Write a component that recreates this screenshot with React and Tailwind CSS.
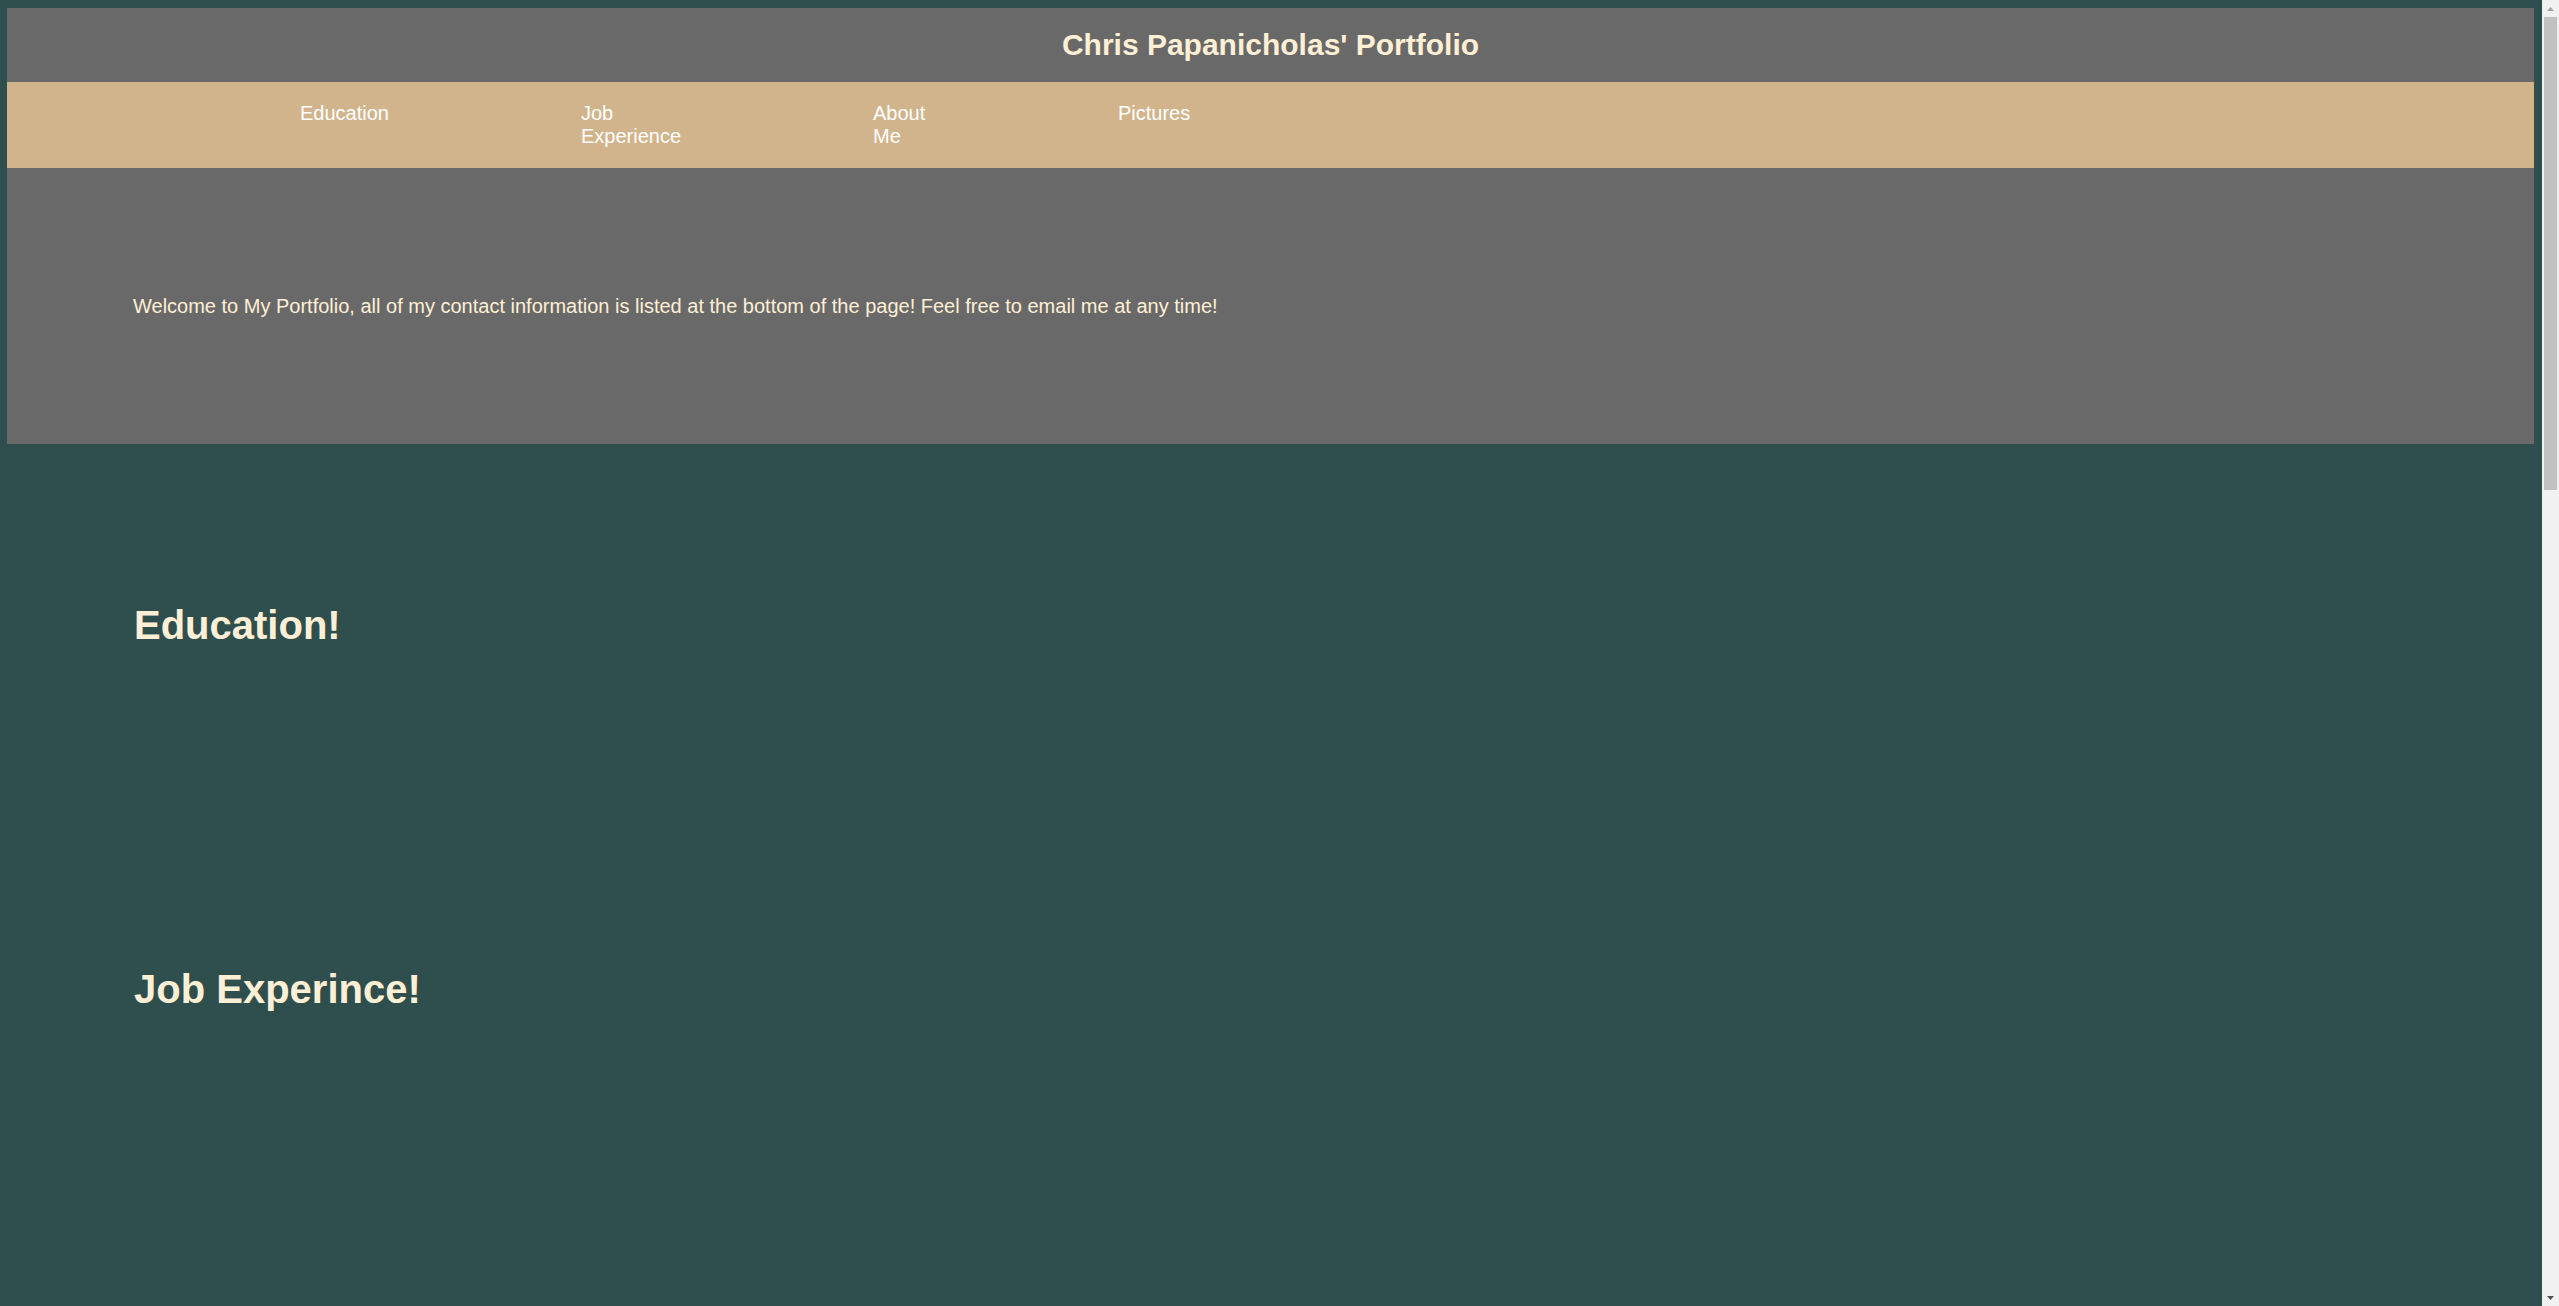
export default function App() {
  const font = { fontFamily: '"Liberation Sans", Arial, sans-serif' };
  return (
    <div className="flex h-screen overflow-hidden bg-[#2F4F4F]" style={font}>
      <main className="min-w-0 flex-1 py-[8px] pl-[7px] pr-[8px]">
        <header className="h-[74px] bg-[#696969] pt-[20px] text-center">
          <h1 className="text-[30px] font-bold leading-[34.5px] text-[#FFEFD5]">
            Chris Papanicholas' Portfolio
          </h1>
        </header>
        <nav className="flex h-[86px] bg-[#D2B48C] pl-[293px] pt-[20px] text-[20px] leading-[23px] text-white">
          <div className="w-[281px]"><span className="block w-min">Education</span></div>
          <div className="w-[292px]"><span className="block w-min">Job Experience</span></div>
          <div className="w-[245px]"><span className="block w-min">About Me</span></div>
          <div><span className="block w-min">Pictures</span></div>
        </nav>
        <section className="flex h-[276px] items-center bg-[#696969] pl-[126px]">
          <p className="text-[20px] leading-[23px] text-[#FFEFD5]">
            Welcome to My Portfolio, all of my contact information is listed at the bottom of the page! Feel free to email me at any time!
          </p>
        </section>
        <div className="pl-[127px] text-[#FFEFD5]">
          <section className="h-[522px] pt-[158px]">
            <h2 className="text-[40px] font-bold leading-[46px]">Education!</h2>
          </section>
          <section>
            <h2 className="text-[40px] font-bold leading-[46px]">Job Experince!</h2>
          </section>
        </div>
      </main>
      <aside className="flex w-[17px] shrink-0 flex-col items-center bg-[#F1F1F1]">
        <div className="flex h-[17px] w-[17px] items-center justify-center">
          <svg width="7" height="4" viewBox="0 0 7 4"><path d="M3.5 0 L7 4 L0 4 Z" fill="#A3A3A3" /></svg>
        </div>
        <div className="h-[473px] w-[13px] bg-[#C1C1C1]" />
        <div className="flex-1" />
        <div className="flex h-[17px] w-[17px] items-center justify-center">
          <svg width="7" height="4" viewBox="0 0 7 4"><path d="M0 0 L7 0 L3.5 4 Z" fill="#505050" /></svg>
        </div>
      </aside>
    </div>
  );
}
